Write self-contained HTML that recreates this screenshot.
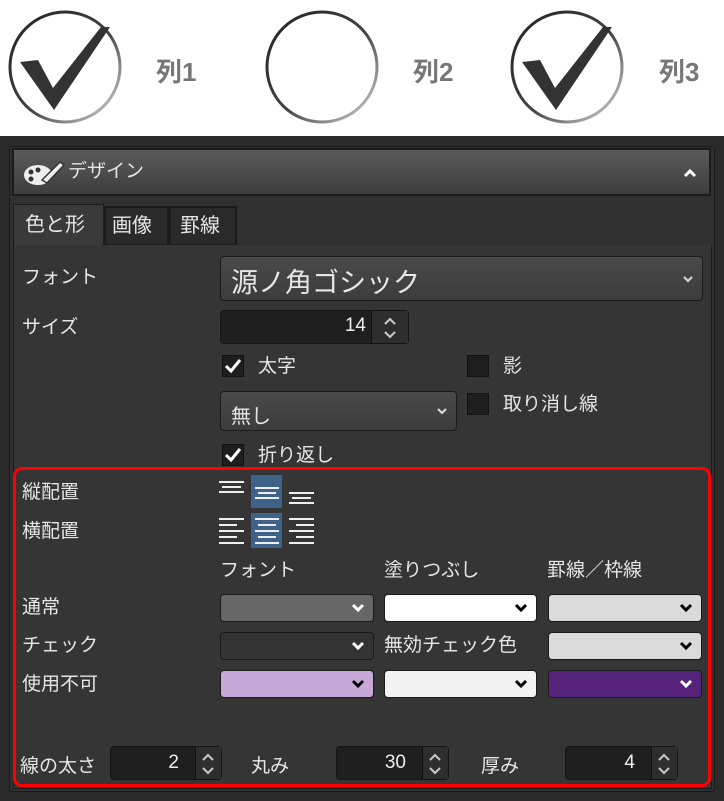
<!DOCTYPE html>
<html><head><meta charset="utf-8"><style>
*{margin:0;padding:0;box-sizing:border-box}
body{width:724px;height:801px;position:relative;background:#fff;font-family:"Liberation Sans","Noto Sans CJK JP",sans-serif;overflow:hidden}
.a{position:absolute}
.t{position:absolute;color:#e6e6e6;font-size:19px;line-height:24px;white-space:nowrap}
.lbl{position:absolute;color:#777;font-weight:bold;font-size:26px}
.dd{position:absolute;border:1px solid #1a1a1a;border-radius:4px}
.chev{position:absolute;right:8px;top:50%;margin-top:-5px}
.spin{position:absolute;background:#1f1f1f;border:1px solid #151515;border-radius:4px}
.cb{position:absolute;width:22px;height:22px;background:#1e1e1e;border:1px solid #111}
</style></head><body>
<!-- top circles -->
<svg class="a" style="left:0;top:0" width="724" height="135">
<defs><linearGradient id="g" x1="0" y1="0" x2="1" y2="1"><stop offset="0" stop-color="#222"/><stop offset="0.55" stop-color="#444"/><stop offset="1" stop-color="#ddd"/></linearGradient></defs>
<g fill="none" stroke-width="3"><circle cx="65" cy="67" r="55" stroke="url(#g)"/><circle cx="322" cy="67" r="55" stroke="url(#g)"/><circle cx="567" cy="67" r="55" stroke="url(#g)"/></g>
<path d="M20 62 L38 60 L53 88 L101 27 L110 27 L54 110 Z" fill="#333"/>
<path d="M522 62 L540 60 L555 88 L603 27 L612 27 L556 110 Z" fill="#333"/>
</svg>
<div class="lbl" style="left:156px;top:52px">列1</div>
<div class="lbl" style="left:413px;top:52px">列2</div>
<div class="lbl" style="left:659px;top:52px">列3</div>
<!-- panel -->
<div class="a" style="left:0;top:136px;width:724px;height:665px;background:#2a2a2a"></div>
<div class="a" style="left:9px;top:146px;width:706px;height:646px;background:#303030;border:1px solid #1a1a1a;border-radius:3px"></div>
<div class="a" style="left:12px;top:148px;width:699px;height:48px;background:linear-gradient(#5a5a5a,#3e3e3e);border:2px solid #1c1c1c"></div>
<svg class="a" style="left:22px;top:158px" width="44" height="30"><ellipse cx="16" cy="17" rx="14" ry="10" fill="#eee"/><circle cx="9" cy="14" r="2.5" fill="#333"/><circle cx="9" cy="21" r="2.5" fill="#333"/><circle cx="16" cy="12" r="2.5" fill="#333"/><path d="M20 22 L38 4 L42 7 L25 25 Z" fill="#eee" stroke="#333" stroke-width="1.5"/></svg>
<div class="t" style="left:68px;top:160px;font-size:19px">デザイン</div>
<svg class="a" style="left:683px;top:168px" width="14" height="10"><path d="M2 8 L7 3 L12 8" fill="none" stroke="#fff" stroke-width="3"/></svg>
<!-- tabs -->
<div class="a" style="left:13px;top:204px;width:91px;height:42px;background:#3a3a3a;border:1px solid #1c1c1c;border-bottom:none"></div>
<div class="a" style="left:104px;top:206px;width:65px;height:40px;background:#2a2a2a;border:2px solid #1c1c1c"></div>
<div class="a" style="left:169px;top:206px;width:68px;height:40px;background:#2a2a2a;border:2px solid #1c1c1c"></div>
<div class="t" style="left:25px;top:213px;font-size:20px">色と形</div>
<div class="t" style="left:112px;top:214px;font-size:20px">画像</div>
<div class="t" style="left:180px;top:214px;font-size:20px">罫線</div>
<div class="a" style="left:13px;top:245px;width:699px;height:544px;background:#353535;border:1px solid #1c1c1c;border-top:none"></div>
<!-- font row -->
<div class="t" style="left:22px;top:266px">フォント</div>
<div class="dd" style="left:220px;top:256px;width:483px;height:45px;background:linear-gradient(#4a4a4a,#3c3c3c)"><span style="position:absolute;left:10px;top:4px;color:#e6e6e6;font-size:27px">源ノ角ゴシック</span><svg class="chev" width="12" height="10"><path d="M2 3 L6 7 L10 3" fill="none" stroke="#ddd" stroke-width="2"/></svg></div>
<div class="t" style="left:22px;top:316px">サイズ</div>
<div class="spin" style="left:220px;top:310px;width:189px;height:34px"><span style="position:absolute;right:42px;top:4px;color:#eee;font-size:19px">14</span><div class="a" style="right:0;top:0;width:37px;height:32px;background:#2e2e2e;border-left:1px solid #111"></div><svg class="a" style="right:10px;top:3px" width="16" height="28"><path d="M3 10 L8 5 L13 10 M3 18 L8 23 L13 18" fill="none" stroke="#ccc" stroke-width="2"/></svg></div>
<!-- checkboxes -->
<div class="cb" style="left:222px;top:355px"></div><svg class="a" style="left:224px;top:358px" width="18" height="16"><path d="M2 8 L7 13 L16 2" fill="none" stroke="#fff" stroke-width="3"/></svg>
<div class="t" style="left:258px;top:355px">太字</div>
<div class="cb" style="left:467px;top:355px"></div><div class="t" style="left:503px;top:355px">影</div>
<div class="dd" style="left:220px;top:391px;width:237px;height:40px;background:linear-gradient(#4a4a4a,#3c3c3c)"><span style="position:absolute;left:10px;top:8px;color:#e6e6e6;font-size:20px">無し</span><svg class="chev" width="12" height="10"><path d="M2 3 L6 7 L10 3" fill="none" stroke="#ddd" stroke-width="2"/></svg></div>
<div class="cb" style="left:467px;top:393px"></div><div class="t" style="left:503px;top:393px">取り消し線</div>
<div class="cb" style="left:222px;top:444px"></div><svg class="a" style="left:224px;top:447px" width="18" height="16"><path d="M2 8 L7 13 L16 2" fill="none" stroke="#fff" stroke-width="3"/></svg>
<div class="t" style="left:258px;top:444px">折り返し</div>
<!-- red box -->
<div class="a" style="left:13px;top:467px;width:698px;height:320px;border:3px solid #f00;border-radius:9px"></div>
<div class="t" style="left:22px;top:481px">縦配置</div>
<div class="t" style="left:22px;top:520px">横配置</div>
<div class="a" style="left:251px;top:475px;width:31px;height:33px;background:#3f6289"></div>
<div class="a" style="left:251px;top:513px;width:31px;height:35px;background:#3f6289"></div>
<svg class="a" style="left:218px;top:475px" width="100" height="75" stroke="#eee" stroke-width="2">
<path d="M1 7h25M4 12h19M1 17h25"/>
<path d="M37 13h24M40 18h18M37 23h24"/>
<path d="M71 18h25M74 23h19M71 28h25"/>
<path d="M1 44h25M1 50h18M1 56h25M1 62h18M1 68h25" />
<path d="M37 44h24M40 50h18M37 56h24M40 62h18M37 68h24"/>
<path d="M71 44h25M78 50h18M71 56h25M78 62h18M71 68h25"/>
</svg>
<div class="t" style="left:220px;top:559px">フォント</div>
<div class="t" style="left:384px;top:559px">塗りつぶし</div>
<div class="t" style="left:547px;top:559px">罫線／枠線</div>
<div class="t" style="left:22px;top:596px">通常</div>
<div class="t" style="left:22px;top:634px">チェック</div>
<div class="t" style="left:22px;top:673px">使用不可</div>
<div class="t" style="left:384px;top:634px">無効チェック色</div>
<svg width="0" height="0" style="position:absolute"><defs><path id="cv" d="M2 2 L7 7 L12 2" fill="none" stroke-width="3"/></defs></svg>
<div class="dd" style="left:220px;top:594px;width:154px;height:28px;background:#666"><svg class="chev" width="14" height="10"><use href="#cv" stroke="#fff"/></svg></div>
<div class="dd" style="left:384px;top:594px;width:153px;height:28px;background:#fff"><svg class="chev" width="14" height="10"><use href="#cv" stroke="#000"/></svg></div>
<div class="dd" style="left:548px;top:594px;width:154px;height:28px;background:#dadada"><svg class="chev" width="14" height="10"><use href="#cv" stroke="#000"/></svg></div>
<div class="dd" style="left:220px;top:632px;width:154px;height:28px;background:#333;border-color:#1a1a1a"><svg class="chev" width="14" height="10"><use href="#cv" stroke="#fff"/></svg></div>
<div class="dd" style="left:548px;top:632px;width:154px;height:28px;background:#dadada"><svg class="chev" width="14" height="10"><use href="#cv" stroke="#000"/></svg></div>
<div class="dd" style="left:220px;top:670px;width:154px;height:28px;background:#c8a8d8"><svg class="chev" width="14" height="10"><use href="#cv" stroke="#000"/></svg></div>
<div class="dd" style="left:384px;top:670px;width:153px;height:28px;background:#f2f2f2"><svg class="chev" width="14" height="10"><use href="#cv" stroke="#000"/></svg></div>
<div class="dd" style="left:548px;top:670px;width:154px;height:28px;background:#55237a"><svg class="chev" width="14" height="10"><use href="#cv" stroke="#fff"/></svg></div>
<!-- bottom -->
<div class="t" style="left:20px;top:755px">線の太さ</div>
<div class="t" style="left:251px;top:755px">丸み</div>
<div class="t" style="left:481px;top:755px">厚み</div>
<div class="spin" style="left:110px;top:746px;width:112px;height:34px"><span style="position:absolute;right:42px;top:5px;color:#eee;font-size:19px">2</span><div class="a" style="right:0;top:0;width:26px;height:32px;background:#2e2e2e;border-left:1px solid #111"></div><svg class="a" style="right:6px;top:3px" width="14" height="28"><path d="M2 10 L7 5 L12 10 M2 18 L7 23 L12 18" fill="none" stroke="#ccc" stroke-width="2"/></svg></div>
<div class="spin" style="left:336px;top:746px;width:113px;height:34px"><span style="position:absolute;right:42px;top:5px;color:#eee;font-size:19px">30</span><div class="a" style="right:0;top:0;width:26px;height:32px;background:#2e2e2e;border-left:1px solid #111"></div><svg class="a" style="right:6px;top:3px" width="14" height="28"><path d="M2 10 L7 5 L12 10 M2 18 L7 23 L12 18" fill="none" stroke="#ccc" stroke-width="2"/></svg></div>
<div class="spin" style="left:565px;top:746px;width:113px;height:34px"><span style="position:absolute;right:42px;top:5px;color:#eee;font-size:19px">4</span><div class="a" style="right:0;top:0;width:26px;height:32px;background:#2e2e2e;border-left:1px solid #111"></div><svg class="a" style="right:6px;top:3px" width="14" height="28"><path d="M2 10 L7 5 L12 10 M2 18 L7 23 L12 18" fill="none" stroke="#ccc" stroke-width="2"/></svg></div>
</body></html>
